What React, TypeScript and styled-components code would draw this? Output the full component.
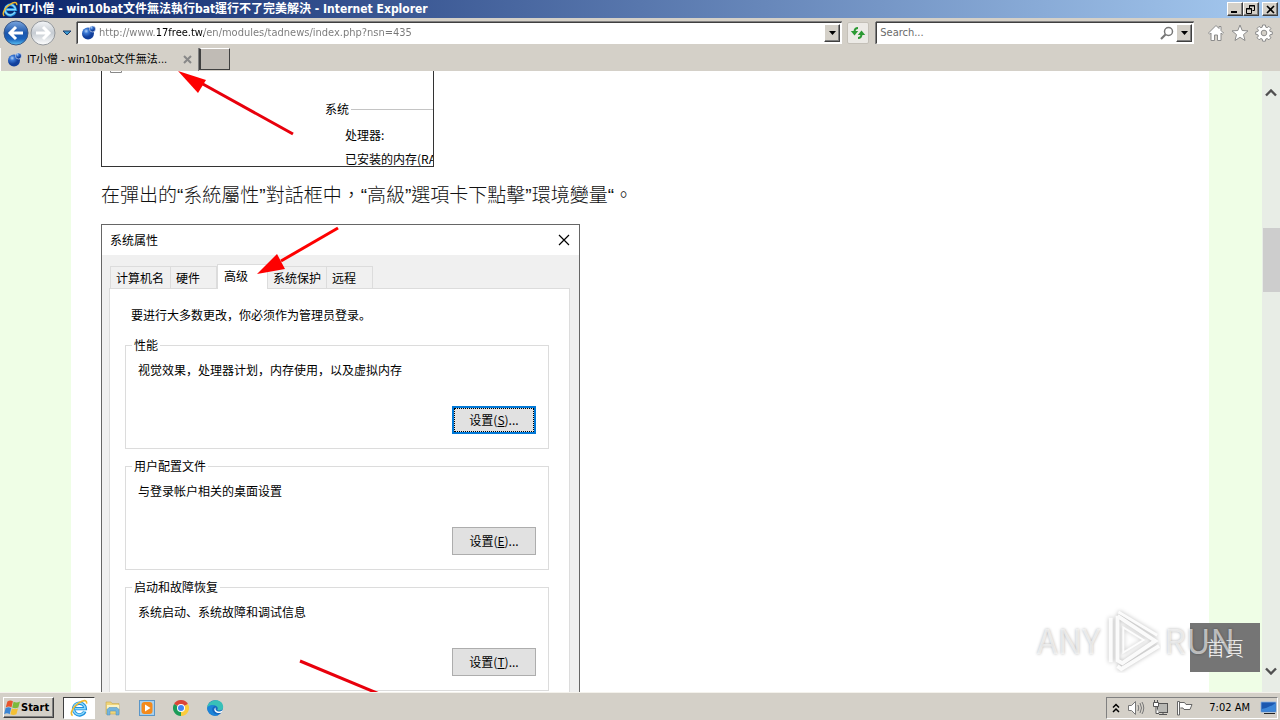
import React from "react";
import styled, { createGlobalStyle, css } from "styled-components";

const face = "#d4d0c8";
const ui = `"DejaVu Sans Condensed", "Noto Sans CJK TC", sans-serif`;
const dialogFont = `"Noto Sans CJK SC", sans-serif`;

const raised = css`
  border: 1px solid;
  border-color: #ffffff #404040 #404040 #ffffff;
  box-shadow: inset -1px -1px 0 #808080;
`;

const Global = createGlobalStyle`
  * { box-sizing: border-box; }
  body { margin: 0; overflow: hidden; }
  button, input { font: inherit; color: inherit; margin: 0; padding: 0; }
  svg { display: block; flex: none; }
`;

const Screen = styled.div`
  display: flex;
  flex-direction: column;
  height: 100vh;
  background: ${face};
  font: 11px/14px ${ui};
  color: #000;
`;

/* ---------- browser chrome ---------- */

const TitleBar = styled.header`
  display: flex;
  align-items: center;
  height: 18px;
  padding: 0 2px;
  gap: 1px;
  background: linear-gradient(90deg, #0a246a, #a6caf0);
  color: #fff;
`;

const Title = styled.h1`
  flex: 1;
  margin: 0;
  font: bold 12px/16px ${ui};
  white-space: nowrap;
`;

const CaptionGroup = styled.div`
  display: flex;
  margin-left: 2px;
`;

const CaptionButton = styled.button`
  display: flex;
  align-items: center;
  justify-content: center;
  width: 16px;
  height: 14px;
  background: ${face};
  color: #000;
  ${raised}
`;

const NavBar = styled.nav`
  display: flex;
  align-items: center;
  height: 30px;
  padding: 0 6px 0 3px;
`;

const RoundButton = styled.button`
  width: 26px;
  height: 26px;
  margin-right: 1px;
  border: 0;
  border-radius: 13px;
  background: none;
`;

const PlainButton = styled.button`
  display: flex;
  align-items: center;
  justify-content: center;
  width: 20px;
  height: 20px;
  border: 0;
  background: none;
`;

const Field = styled.form<{ $grow?: boolean }>`
  display: flex;
  align-items: center;
  flex: ${(p) => (p.$grow ? "1" : "0 0 25%")};
  min-width: 0;
  height: 22px;
  padding: 0 1px 0 3px;
  gap: 2px;
  background: #fff;
  border: 1px solid;
  border-color: #404040 #fff #fff #404040;
  box-shadow: 0 -1px 0 #808080, -1px 0 0 #808080;
`;

const AddressInput = styled.input`
  flex: 1;
  min-width: 0;
  border: 0;
  outline: 0;
  background: linear-gradient(90deg, #777 57px, #000 57px, #000 105px, #777 105px);
  background-clip: text;
  -webkit-text-fill-color: transparent;
`;

const SearchInput = styled.input`
  flex: 1;
  min-width: 0;
  border: 0;
  outline: 0;
  background: none;
  &::placeholder { color: #6a6a6a; }
`;

const DropButton = styled.button`
  display: flex;
  align-items: center;
  justify-content: center;
  width: 16px;
  height: 18px;
  background: ${face};
  ${raised}
`;

const RefreshButton = styled.button`
  display: flex;
  align-items: center;
  justify-content: center;
  width: 22px;
  height: 22px;
  margin: 0 7px 0 5px;
  border: 1px solid #c4c0b8;
  border-radius: 2px;
  background: #eceae6;
`;

const NavIcons = styled.div`
  display: flex;
  gap: 4px;
  margin-left: 12px;
`;

const TabStrip = styled.div`
  display: flex;
  height: 23px;
`;

const Tab = styled.div`
  display: flex;
  align-items: center;
  width: 199px;
  padding: 0 1px 0 6px;
  gap: 4px;
  border-left: 1px solid #fff;
  border-right: 1px solid #808080;
`;

const TabLabel = styled.span`
  flex: 1;
  white-space: nowrap;
`;

const NewTab = styled.button`
  width: 31px;
  height: 22px;
  background: #c0bbb5;
  border: 1px solid;
  border-color: #fff #404040 #404040;
  border-left: 2px solid #404040;
`;

/* ---------- web page ---------- */

const Viewport = styled.main`
  position: relative;
  display: flex;
  flex: 1;
  min-height: 0;
  overflow: hidden;
  background: #effee6;
`;

const Article = styled.article`
  flex: 1;
  margin: 0 53px 0 71px;
  padding: 0 30px;
  background: #fff;
`;

const Figure = styled.figure<{ $width: number }>`
  position: relative;
  width: ${(p) => p.$width}px;
  margin: 0;
  font: 12px/16px ${dialogFont};
`;

const SystemInfo = styled.div`
  height: 96px;
  padding: 30px 0 0 223px;
  border: 1px solid #333;
  border-top: 0;
  overflow: hidden;
  white-space: nowrap;
`;

const InfoHeading = styled.div`
  display: flex;
  align-items: center;
  gap: 2px;
  margin-bottom: 6px;
  &::after { content: ""; flex: 1; height: 1px; background: #c4c4c4; }
`;

const InfoLine = styled.div`
  padding-left: 20px;
  line-height: 24px;
`;

const Paragraph = styled.p`
  margin: 15px 0 14px;
  font: 300 19px/28px "Liberation Sans", "Noto Sans CJK TC", sans-serif;
  color: #111;
`;

const Arrows = styled.svg`
  position: absolute;
  left: 0;
  top: 0;
  pointer-events: none;
  overflow: visible;
`;

const Dialog = styled.section`
  padding-bottom: 40px;
  border: 1px solid #666;
  background: #f0f0f0;
`;

const DialogTitle = styled.div`
  display: flex;
  align-items: center;
  justify-content: space-between;
  height: 30px;
  padding: 0 5px 0 8px;
  background: #fff;
`;

const DialogTabs = styled.div`
  display: flex;
  align-items: flex-end;
  height: 33px;
  padding: 0 8px;
`;

const DialogTab = styled.button<{ $width: number; $active?: boolean }>`
  width: ${(p) => p.$width}px;
  height: ${(p) => (p.$active ? 25 : 22)}px;
  padding: 0 0 ${(p) => (p.$active ? 2 : 0)}px ${(p) => (p.$active ? 6 : 5)}px;
  margin-bottom: ${(p) => (p.$active ? -1 : 0)}px;
  text-align: left;
  border: 1px solid #dcdcdc;
  border-left-width: ${(p) => (p.$active ? 1 : 0)}px;
  border-bottom: 0;
  background: ${(p) => (p.$active ? "#fff" : "#f0f0f0")};
  white-space: nowrap;
  &:first-child { border-left-width: 1px; }
`;

const DialogPanel = styled.div`
  display: flex;
  flex-direction: column;
  gap: 9px;
  margin: 0 9px 0 7px;
  padding: 18px 20px 20px 15px;
  border: 1px solid #dcdcdc;
  background: #fff;
`;

const Notice = styled.p`
  margin: 0 0 5px 6px;
`;

const Group = styled.fieldset`
  display: flex;
  flex-direction: column;
  justify-content: space-between;
  height: 112px;
  min-width: 0;
  margin: 0;
  padding: 9px 12px 14px;
  border: 1px solid #dcdcdc;
`;

const Legend = styled.legend`
  margin-left: -6px;
  padding: 0 2px;
`;

const GroupBody = styled.div`
  display: flex;
  flex-direction: column;
  gap: 28px;
`;

const SettingsButton = styled.button<{ $focused?: boolean }>`
  align-self: flex-end;
  width: 84px;
  height: 28px;
  border: ${(p) => (p.$focused ? "2px solid #0078d7" : "1px solid #adadad")};
  outline: ${(p) => (p.$focused ? "1px dotted #000" : "0")};
  outline-offset: -3px;
  background: #e1e1e1;
`;

const Scrollbar = styled.div`
  display: flex;
  flex-direction: column;
  width: 18px;
  background: #e8ede6;
`;

const ScrollButton = styled.button`
  display: flex;
  align-items: center;
  justify-content: center;
  height: 43px;
  border: 0;
  background: none;
`;

const Track = styled.div`
  flex: 1;
  padding: 114px 0 0 1px;
`;

const Thumb = styled.div`
  height: 64px;
  background: #cdcdcd;
`;

const HomeLink = styled.a`
  position: absolute;
  right: 20px;
  bottom: 20px;
  width: 70px;
  height: 49px;
  background: #757575;
  color: #fff;
  font: 300 19px/49px "Noto Sans CJK TC", sans-serif;
  text-align: center;
  text-decoration: none;
`;

const Watermark = styled.div`
  position: absolute;
  right: 45px;
  bottom: 16px;
  display: flex;
  align-items: center;
  justify-content: space-between;
  width: 198px;
  height: 72px;
  font: 34px/72px "Noto Sans CJK SC", sans-serif;
  color: rgba(255, 255, 255, 0.6);
  text-shadow: 0 0 3px rgba(0, 0, 0, 0.3);
  pointer-events: none;
`;

/* ---------- taskbar ---------- */

const Taskbar = styled.footer`
  display: flex;
  align-items: center;
  height: 28px;
  padding: 2px 2px 0 3px;
  border-top: 1px solid #f4f2ec;
  background: ${face};
`;

const StartButton = styled.button`
  display: flex;
  align-items: center;
  width: 51px;
  height: 21px;
  background: ${face};
  font: bold 11px/16px ${ui};
  ${raised}
`;

const TaskButton = styled.button<{ $active?: boolean }>`
  display: flex;
  align-items: center;
  justify-content: center;
  width: 32px;
  height: 22px;
  border: 1px solid;
  border-color: ${(p) => (p.$active ? "#404040 #fff #fff #404040" : "transparent")};
  background: ${(p) => (p.$active ? "#fff" : "none")};
`;

const Launchers = styled.div`
  display: flex;
  flex: 1;
  gap: 2px;
  margin-left: 9px;
`;

const Tray = styled.div`
  display: flex;
  align-items: center;
  height: 22px;
  padding: 0 0 0 5px;
  gap: 7px;
  border: 1px solid;
  border-color: #808080 #fff #fff #808080;
`;

const Clock = styled.time`
  margin: 0 3px 0 9px;
  white-space: nowrap;
`;

/* ---------- icons ---------- */

const IeIcon = ({ size = 16 }: { size?: number }) => (
  <svg width={size} height={size} viewBox="0 0 16 16" fill="none">
    <path d="M13.200 11A5.200 5.200 0 1 1 13.600 8.600H4.400" stroke="#1d8fdc" strokeWidth="3" />
    <path d="M13 10.800A5.200 5.200 0 1 1 13.400 8.600H4.400" stroke="#8cd8fa" strokeWidth="1.300" />
    <path d="M2.300 14.800C-.6 12.800 3 6.800 7.600 3.700 11.500.9 15.300.4 14.700 4.200" stroke="#f0b82c" strokeWidth="1.400" />
  </svg>
);

const SiteIcon = () => (
  <svg width="16" height="16" viewBox="0 0 16 16">
    <defs>
      <radialGradient id="globe" cx="35%" cy="30%">
        <stop offset="0" stopColor="#b4d4f8" />
        <stop offset=".4" stopColor="#3a78d4" />
        <stop offset="1" stopColor="#12409c" />
      </radialGradient>
    </defs>
    <circle cx="7" cy="8.500" r="6" fill="url(#globe)" />
    <circle cx="11.500" cy="4" r="3" fill="url(#globe)" stroke="#e4ecf8" strokeWidth=".6" />
  </svg>
);

const RoundArrow = ({ back }: { back?: boolean }) => (
  <svg width="26" height="26" viewBox="0 0 26 26">
    <defs>
      <linearGradient id="backFill" x2="0" y2="1">
        <stop offset="0" stopColor="#7aa6de" />
        <stop offset=".5" stopColor="#1c56ac" />
        <stop offset=".75" stopColor="#1a62bc" />
        <stop offset="1" stopColor="#5cc4f4" />
      </linearGradient>
      <linearGradient id="nextFill" x2="0" y2="1">
        <stop offset="0" stopColor="#f4f6f8" />
        <stop offset=".5" stopColor="#c6ccd2" />
        <stop offset="1" stopColor="#fff" />
      </linearGradient>
    </defs>
    <circle cx="13" cy="13" r="12" fill={back ? "url(#backFill)" : "url(#nextFill)"} stroke={back ? "#3a5684" : "#94989c"} />
    <path
      d={back ? "M20 13H8M13 7l-6 6 6 6" : "M6 13h12M13 7l6 6-6 6"}
      fill="none"
      stroke="#fff"
      strokeWidth="3"
    />
  </svg>
);

const Triangle = ({ fill = "#000", stroke }: { fill?: string; stroke?: string }) => (
  <svg width="10" height="6" viewBox="0 0 10 6">
    <path d="M1 1h8L5 5z" fill={fill} stroke={stroke} />
  </svg>
);

const SmallTriangle = () => (
  <svg width="7" height="4" viewBox="0 0 7 4">
    <path d="M0 0h7L3.500 4z" />
  </svg>
);

const Magnifier = () => (
  <svg width="14" height="14" viewBox="0 0 14 14" fill="none" stroke="#777">
    <circle cx="8.500" cy="5.500" r="4" strokeWidth="1.500" />
    <path d="M5.500 8.500L1 13" strokeWidth="2.200" />
  </svg>
);

const RefreshIcon = () => (
  <svg width="16" height="16" viewBox="0 0 16 16" fill="none" stroke="#2c9a34" strokeWidth="2">
    <path d="M8 3C5.500 3 4.500 4.500 4.500 7" />
    <path d="M.8 6L4.500 10.500 8.200 6z" fill="#2c9a34" stroke="none" />
    <path d="M8 13c2.500 0 3.500-1.500 3.500-4" />
    <path d="M7.800 10l3.700-4.500L15.200 10z" fill="#2c9a34" stroke="none" />
  </svg>
);

const outline = { width: 18, height: 18, viewBox: "0 0 18 18", fill: "#fff", stroke: "#8c8c8c" };

const HomeIcon = () => (
  <svg {...outline}>
    <path d="M9 1.500L1.500 9l1.200 1.200L4 9v7.500h3.500V11h3v5.500H14V9l1.300 1.200L16.500 9 14 6.500v-4h-2v2z" />
  </svg>
);

const StarIcon = () => (
  <svg {...outline}>
    <path d="M9 1l2.200 5.500 5.800.4-4.500 3.700 1.500 5.900-5-3.200-5 3.200 1.500-5.900L1 6.900l5.800-.4z" />
  </svg>
);

const GearIcon = () => (
  <svg {...outline}>
    <path d="M7.600 1h2.800l.4 2.200 1.300.5L13.900 2.400l2 2-1.300 1.800.5 1.300 2.200.4v2.400l-2.200.4-.5 1.300 1.300 1.800-2 2-1.800-1.300-1.300.5-.4 2.200H7.600l-.4-2.200-1.300-.5-1.800 1.300-2-2 1.300-1.800-.5-1.300L.7 10.300V7.900l2.200-.4.5-1.300L2.100 4.400l2-2 1.800 1.300 1.300-.5z" />
    <circle cx="9" cy="9" r="2.800" fill={face} />
  </svg>
);

const CloseIcon = ({ size = 9, color = "#000", weight = 1.6 }: { size?: number; color?: string; weight?: number }) => (
  <svg width={size} height={size} viewBox={`0 0 ${size} ${size}`} stroke={color} strokeWidth={weight}>
    <path d={`M1 1L${size - 1} ${size - 1}M${size - 1} 1L1 ${size - 1}`} />
  </svg>
);

const Chevron = ({ down }: { down?: boolean }) => (
  <svg width="12" height="8" viewBox="0 0 12 8" fill="none" stroke="#505050" strokeWidth="2.400">
    <path d={down ? "M1 1.500l5 5 5-5" : "M1 6.500l5-5 5 5"} />
  </svg>
);

const WindowsFlag = () => (
  <svg width="17" height="16" viewBox="0 0 17 16">
    <path d="M3.400 1.500c2-1.400 3.700-1.400 5.500-.3L7.500 7.200C5.600 6.200 3.900 6.200 1.800 7.200z" fill="#e8542c" />
    <path d="M9.600 1.700c2.200 1 4 .9 6.400-.3L14.300 7.500c-2.200 1-4 1-6.100 0z" fill="#7cba3c" />
    <path d="M1.600 8.100c2-1 3.700-1 5.600 0L5.700 14.200C3.800 13 2.200 13 .1 14.200z" fill="#3c86d4" />
    <path d="M7.900 8.400c2.100 1 3.900.9 6.100 0l-1.600 5.900c-2.100 1-3.900.9-6 0z" fill="#f4c034" />
  </svg>
);

const FolderIcon = () => (
  <svg width="18" height="16" viewBox="0 0 18 16">
    <path d="M2 2h5l1 1.500h7V14H2z" fill="#f0d478" stroke="#c8a850" strokeWidth=".6" />
    <path d="M3 5h12v4H3z" fill="#fbf3c4" />
    <path d="M3 9.500l2-2h8l2 2V15h-3v-4H6v4H3z" fill="#74b4dc" stroke="#4a8cbc" strokeWidth=".5" />
  </svg>
);

const PlayerIcon = () => (
  <svg width="16" height="16" viewBox="0 0 16 16">
    <rect x=".5" y=".5" width="15" height="15" fill="#a8d0ee" stroke="#5a96c8" />
    <rect x="2.500" y="2" width="11" height="12" rx="3" fill="#f48a1c" />
    <path d="M6 4.500v7L11.500 8z" fill="#fff" />
  </svg>
);

const ChromeIcon = () => (
  <svg width="16" height="16" viewBox="0 0 16 16">
    <path d="M8 8L1.070 4A8 8 0 0 1 14.930 4z" fill="#dc4437" />
    <path d="M8 8L14.930 4A8 8 0 0 1 8 16z" fill="#fccc3c" />
    <path d="M8 8v8A8 8 0 0 1 1.070 4z" fill="#1c9c58" />
    <circle cx="8" cy="8" r="4" fill="#fff" />
    <circle cx="8" cy="8" r="3" fill="#4284f4" />
  </svg>
);

const EdgeIcon = () => (
  <svg width="17" height="16" viewBox="0 0 17 16">
    <circle cx="8" cy="8" r="7.800" fill="#1668c0" />
    <path d="M.3 7C1.500-1.500 16-2.500 16.200 7c0 3.400-3.700 4.300-6 3 1.500-2.200-.4-4.600-2.800-4.600C4.200 5.400 1.500 6 .3 8z" fill="#38c0b8" />
    <path d="M.2 8C2 4.500 6 4.500 8 6c-3 .5-4 4.500-1 7 1.500 1.300 4 1.800 5.600 1.300A7.900 7.900 0 0 1 .2 8z" fill="#1c84d8" />
    <path d="M9 7.200c-1.800 2.500 1 4.600 4 4.200l3-1.200-1.500 2.300c-4 1.600-8-.8-7-4z" fill="#fff" />
  </svg>
);

const TrayChevrons = () => (
  <svg width="8" height="10" viewBox="0 0 8 10" fill="none" stroke="#000" strokeWidth="1.500">
    <path d="M1 4.500l3-3 3 3M1 9l3-3 3 3" />
  </svg>
);

const SpeakerIcon = () => (
  <svg width="18" height="16" viewBox="0 0 18 16" fill="none" stroke="#777">
    <path d="M1.500 5.500h3l4-4v13l-4-4h-3z" fill="#fff" />
    <path d="M11 5q1.500 3 0 6M13 3q3 5 0 10M15 2q3.500 6 0 12" />
  </svg>
);

const NetworkIcon = () => (
  <svg width="17" height="16" viewBox="0 0 17 16" fill="#fff" stroke="#555">
    <rect x="5.500" y="3.500" width="10" height="9" fill="#b8b8b4" />
    <path d="M7 14.500h8M11 12.500v2" />
    <path d="M1.500 2.500h5v4h-5zM2.500 0v2.500M5.500 0v2.500M4 6.500v7h3" />
  </svg>
);

const FlagIcon = () => (
  <svg width="17" height="16" viewBox="0 0 17 16" fill="#fff" stroke="#666">
    <path d="M2.500 2.500h6l1.500 2h6l-2 5H8l-1-1.500H4.500" />
    <path d="M1.500 1.500h2V15h-2z" />
  </svg>
);

const MonitorIcon = () => (
  <svg width="17" height="14" viewBox="0 0 17 14">
    <path d="M1 1h15v10H1z" fill="#1c58b0" stroke="#8ab4e4" strokeWidth=".8" />
    <path d="M1.500 8Q9 7 15.500 2v8.500h-14z" fill="#3c86d8" />
    <path d="M4 12.500h11" stroke="#222" />
  </svg>
);

const PlayLogo = () => (
  <svg width="58" height="66" viewBox="0 0 60 66" fill="none" stroke="#fff" strokeOpacity=".9" strokeWidth="4">
    <g style={{ filter: "drop-shadow(0 0 2px rgba(0,0,0,.3))" }}>
      <path d="M8 56V10M15 8v46l5 3L54 34 15 8M15 60l4 3L58 39" />
      <path d="M16 4l40 24" strokeWidth="3" />
      <path d="M21 20v26l21-13z" strokeWidth="2" />
    </g>
  </svg>
);

/* ---------- parts ---------- */

const groups = [
  { title: "性能", text: "视觉效果，处理器计划，内存使用，以及虚拟内存", accel: "S", focused: true },
  { title: "用户配置文件", text: "与登录帐户相关的桌面设置", accel: "E" },
  { title: "启动和故障恢复", text: "系统启动、系统故障和调试信息", accel: "T" },
];

const tabs = [
  { label: "计算机名", width: 61 },
  { label: "硬件", width: 46 },
  { label: "高级", width: 51, active: true },
  { label: "系统保护", width: 59 },
  { label: "远程", width: 46 },
];

const SystemProperties = () => (
  <Dialog aria-label="系统属性">
    <DialogTitle>
      <span>系统属性</span>
      <PlainButton aria-label="关闭">
        <CloseIcon size={12} weight={1.2} />
      </PlainButton>
    </DialogTitle>
    <DialogTabs>
      {tabs.map((t) => (
        <DialogTab key={t.label} $width={t.width} $active={t.active}>
          {t.label}
        </DialogTab>
      ))}
    </DialogTabs>
    <DialogPanel>
      <Notice>要进行大多数更改，你必须作为管理员登录。</Notice>
      {groups.map((g) => (
        <Group key={g.title}>
          <Legend>{g.title}</Legend>
          <GroupBody>
            <span>{g.text}</span>
            <SettingsButton $focused={g.focused}>
              设置(<u>{g.accel}</u>)...
            </SettingsButton>
          </GroupBody>
        </Group>
      ))}
    </DialogPanel>
  </Dialog>
);

export default function App() {
  return (
    <Screen lang="zh-Hant">
      <Global />
      <TitleBar>
        <IeIcon />
        <Title>IT小僧 - win10bat文件無法執行bat運行不了完美解決 - Internet Explorer</Title>
        <CaptionGroup>
          <CaptionButton aria-label="Minimize">
            <svg width="10" height="8"><path d="M1 6h6v2H1z" /></svg>
          </CaptionButton>
          <CaptionButton aria-label="Restore">
            <svg width="10" height="9" viewBox="0 0 10 9" fill="none" stroke="#000">
              <path d="M3.500 3V.5h5v5H6.500M3 1h6M.5 3.500h5v5h-5zM0 4h6" />
            </svg>
          </CaptionButton>
        </CaptionGroup>
        <CaptionGroup>
          <CaptionButton aria-label="Close">
            <CloseIcon />
          </CaptionButton>
        </CaptionGroup>
      </TitleBar>

      <NavBar>
        <RoundButton aria-label="Back"><RoundArrow back /></RoundButton>
        <RoundButton aria-label="Forward"><RoundArrow /></RoundButton>
        <PlainButton aria-label="Recent pages">
          <Triangle fill="#3a9ad0" stroke="#1c3c6c" />
        </PlainButton>
        <Field $grow>
          <SiteIcon />
          <AddressInput aria-label="Address" defaultValue="http://www.17free.tw/en/modules/tadnews/index.php?nsn=435" />
          <DropButton type="button" aria-label="Show addresses"><SmallTriangle /></DropButton>
        </Field>
        <RefreshButton aria-label="Refresh"><RefreshIcon /></RefreshButton>
        <Field>
          <SearchInput aria-label="Search" placeholder="Search..." />
          <Magnifier />
          <DropButton type="button" aria-label="Search options"><SmallTriangle /></DropButton>
        </Field>
        <NavIcons>
          <PlainButton aria-label="Home"><HomeIcon /></PlainButton>
          <PlainButton aria-label="Favorites"><StarIcon /></PlainButton>
          <PlainButton aria-label="Tools"><GearIcon /></PlainButton>
        </NavIcons>
      </NavBar>

      <TabStrip>
        <Tab>
          <SiteIcon />
          <TabLabel>IT小僧 - win10bat文件無法...</TabLabel>
          <PlainButton aria-label="Close tab"><CloseIcon color="#888" weight={2} /></PlainButton>
        </Tab>
        <NewTab aria-label="New tab" />
      </TabStrip>

      <Viewport>
        <Article>
          <Figure $width={333} lang="zh-Hans">
            <SystemInfo>
              <InfoHeading>系统</InfoHeading>
              <InfoLine>处理器:</InfoLine>
              <InfoLine>已安装的内存(RAM):</InfoLine>
            </SystemInfo>
            <Arrows width="333" height="96">
              <path d="M9.500 0v1.500h11V0" fill="none" stroke="#888" />
              <path d="M100 12L192 63" stroke="#e8000c" strokeWidth="3" />
              <path d="M77 0l28 9-8 13z" fill="#fe0000" />
            </Arrows>
          </Figure>
          <Paragraph>在彈出的“系統屬性”對話框中，“高級”選項卡下點擊”環境變量“。</Paragraph>
          <Figure $width={479} lang="zh-Hans">
            <SystemProperties />
            <Arrows width="479" height="520">
              <path d="M180 37L237 4" stroke="#fe0000" strokeWidth="3" />
              <path d="M156 50l20-20 8 15z" fill="#fe0000" />
              <path d="M199 437L300 479" stroke="#e8000c" strokeWidth="3" />
            </Arrows>
          </Figure>
        </Article>
        <Scrollbar>
          <ScrollButton aria-label="Scroll up"><Chevron /></ScrollButton>
          <Track><Thumb /></Track>
          <ScrollButton aria-label="Scroll down"><Chevron down /></ScrollButton>
        </Scrollbar>
        <HomeLink href="#">首頁</HomeLink>
        <Watermark>
          <span>ANY</span>
          <PlayLogo />
          <span>RUN</span>
        </Watermark>
      </Viewport>

      <Taskbar>
        <StartButton><WindowsFlag />Start</StartButton>
        <Launchers>
          <TaskButton $active aria-label="Internet Explorer"><IeIcon size={18} /></TaskButton>
          <TaskButton aria-label="Explorer"><FolderIcon /></TaskButton>
          <TaskButton aria-label="Media Player"><PlayerIcon /></TaskButton>
          <TaskButton aria-label="Chrome"><ChromeIcon /></TaskButton>
          <TaskButton aria-label="Edge"><EdgeIcon /></TaskButton>
        </Launchers>
        <Tray>
          <TrayChevrons />
          <SpeakerIcon />
          <NetworkIcon />
          <FlagIcon />
          <Clock>7:02 AM</Clock>
          <MonitorIcon />
        </Tray>
      </Taskbar>
    </Screen>
  );
}
